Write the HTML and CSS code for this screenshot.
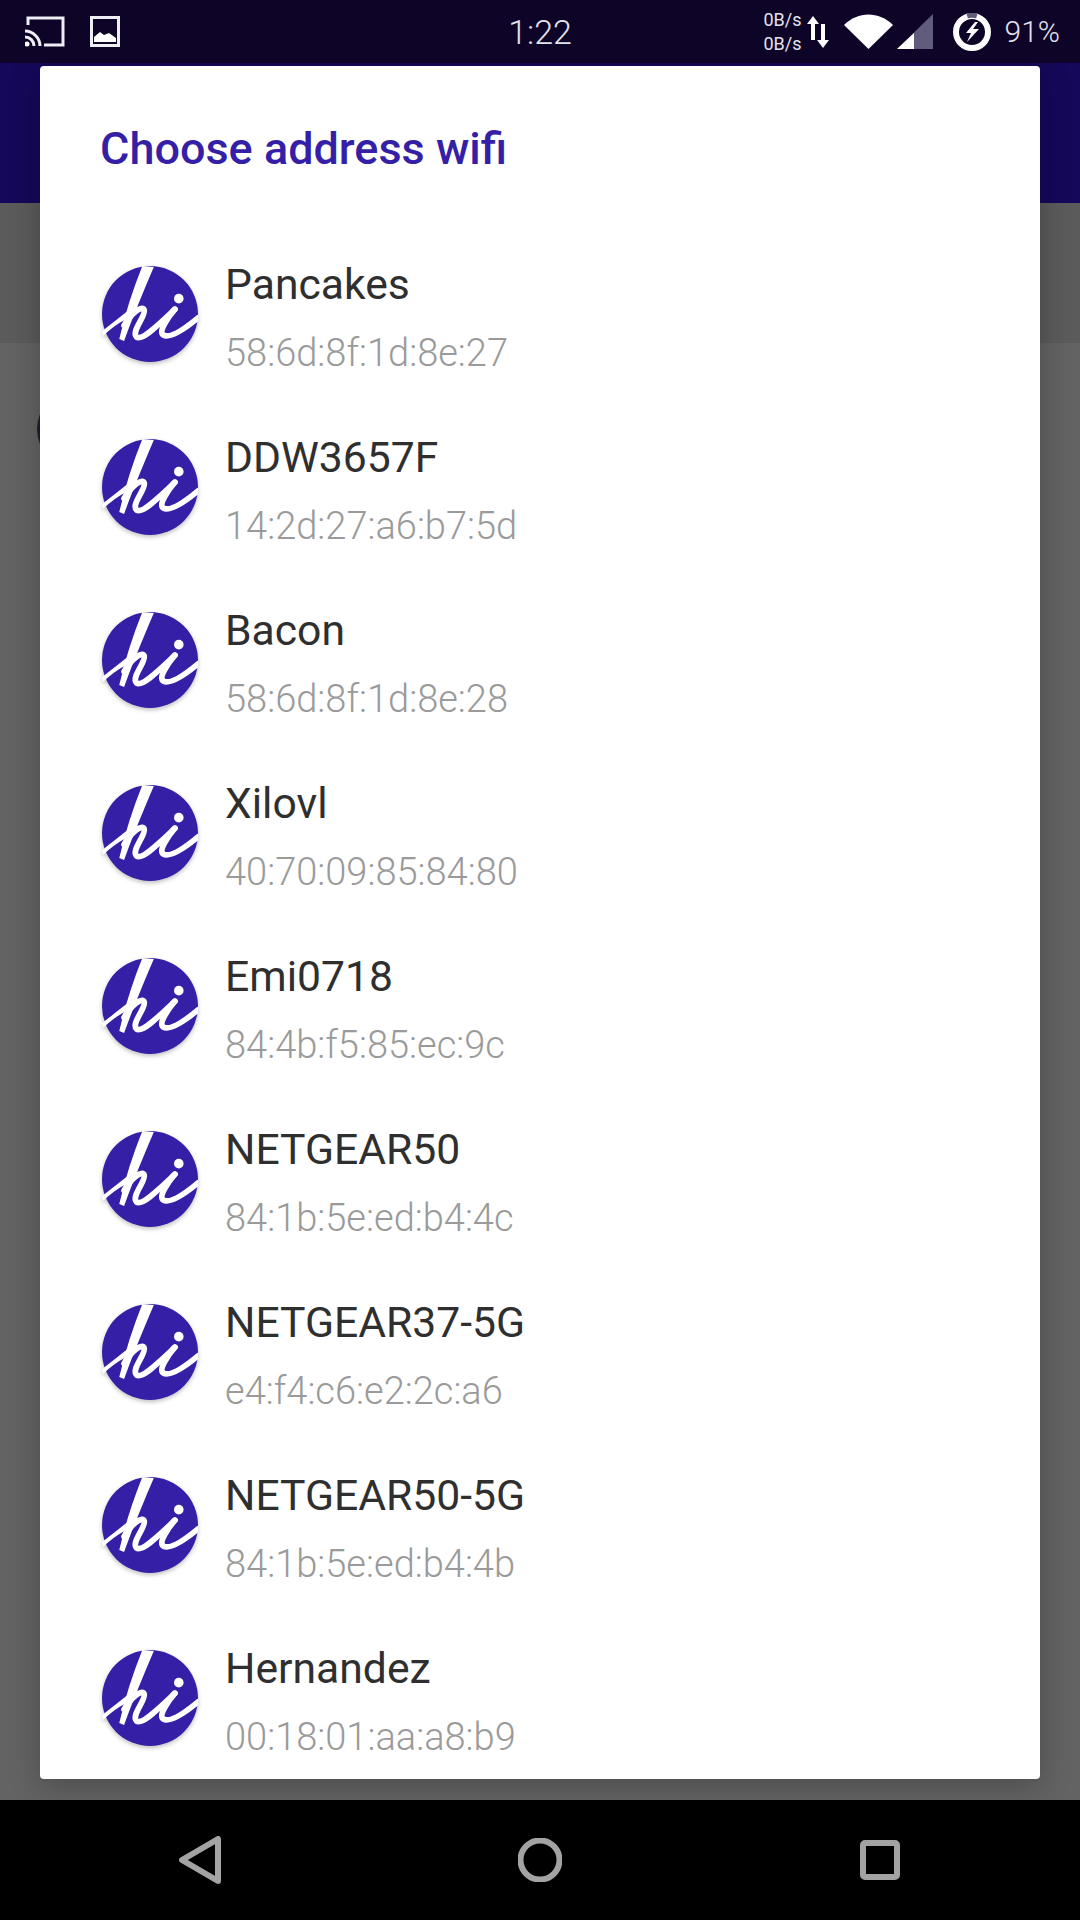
FILE: index.html
```html
<!DOCTYPE html>
<html lang="en">
<head>
    <meta charset="UTF-8">
    <meta name="viewport" content="width=device-width, initial-scale=1.0">
    <title>Choose address wifi</title>
    <link rel="stylesheet" href="styles.css">
</head>
<body>

<svg class="defs" width="0" height="0">
    <symbol id="hi" viewBox="0 0 100 100">
        <circle cx="50" cy="50" r="50" fill="#351fa6"/>
        <path d="M42 0L54 1C45 22 34 48 23 78L18 76C24 50 32 25 42 0Z" fill="#fff"/>
        <path d="M0 68C10 60 20 52 29 45L26 55C16 60 8 66 1 73Z" fill="#fff"/>
        <path class="hi-stroke" d="M23 62C30 50 42 40 44 46C46 52 30 68 36 74C42 78 58 62 76 45"/>
        <path class="hi-stroke" d="M76 45C70 52 58 68 64 72C72 76 88 64 100 54"/>
        <circle cx="80" cy="34" r="5" fill="#fff"/>
    </symbol>
</svg>

<div class="statusbar">
    <div class="status-left">
        <svg width="40" height="31" viewBox="0 0 40 31">
            <path class="ico-line" d="M3 9V2H38V29H19"/>
            <path class="ico-line" d="M0 15C8 15 15 22 15 30M0 21C5 21 9 25 9 30" stroke-width="3"/>
            <circle cx="2" cy="28" r="2.500" fill="#fff"/>
        </svg>
        <svg width="30" height="31" viewBox="0 0 30 31">
            <rect class="ico-line" x="1.500" y="1.500" width="27" height="28"/>
            <path d="M4 26V21L10 16L14 19L19 17L26 22V26Z" fill="#fff"/>
        </svg>
    </div>
    <div class="clock">1:22</div>
    <div class="status-right">
        <div class="netspeed">0B/s<br>0B/s</div>
        <svg class="arrows" width="22" height="32" viewBox="0 0 22 32">
            <path d="M6 0L12 8H8V24H4V8H0ZM16 32L22 24H18V8H14V24H10Z" fill="#fff"/>
        </svg>
        <svg class="wifi" width="49" height="35" viewBox="0 0 49 35">
            <path d="M0 11C14 -3 35 -3 49 11L24.500 35Z" fill="#fff"/>
        </svg>
        <svg class="signal" width="36" height="35" viewBox="0 0 36 35">
            <path d="M36 0V35H0Z" fill="#625c7c"/>
            <path d="M17 19V35H0Z" fill="#fff"/>
        </svg>
        <svg class="battery" width="38" height="38" viewBox="0 0 38 38">
            <circle cx="19" cy="19" r="16" fill="none" stroke="#fff" stroke-width="6"/>
            <path d="M14 2.500A17 17 0 0 1 24 2.500" fill="none" stroke="#625c7c" stroke-width="6"/>
            <path d="M22 9L13 20H18L14 29L26 16H20L25 9Z" fill="#fff"/>
        </svg>
        <div class="battery-pct">91%</div>
    </div>
</div>

<div class="screen">
    <div class="appbar"></div>
    <div class="subbar"></div>
    <div class="peek"></div>

    <div class="dialog">
        <h1 class="dialog-title">Choose address wifi</h1>
        <div class="wifi-list">
            <div class="wifi-row">
                <svg class="avatar"><use href="#hi"/></svg>
                <div><div class="ssid">Pancakes</div><div class="mac">58:6d:8f:1d:8e:27</div></div>
            </div>
            <div class="wifi-row">
                <svg class="avatar"><use href="#hi"/></svg>
                <div><div class="ssid">DDW3657F</div><div class="mac">14:2d:27:a6:b7:5d</div></div>
            </div>
            <div class="wifi-row">
                <svg class="avatar"><use href="#hi"/></svg>
                <div><div class="ssid">Bacon</div><div class="mac">58:6d:8f:1d:8e:28</div></div>
            </div>
            <div class="wifi-row">
                <svg class="avatar"><use href="#hi"/></svg>
                <div><div class="ssid">Xilovl</div><div class="mac">40:70:09:85:84:80</div></div>
            </div>
            <div class="wifi-row">
                <svg class="avatar"><use href="#hi"/></svg>
                <div><div class="ssid">Emi0718</div><div class="mac">84:4b:f5:85:ec:9c</div></div>
            </div>
            <div class="wifi-row">
                <svg class="avatar"><use href="#hi"/></svg>
                <div><div class="ssid">NETGEAR50</div><div class="mac">84:1b:5e:ed:b4:4c</div></div>
            </div>
            <div class="wifi-row">
                <svg class="avatar"><use href="#hi"/></svg>
                <div><div class="ssid">NETGEAR37-5G</div><div class="mac">e4:f4:c6:e2:2c:a6</div></div>
            </div>
            <div class="wifi-row">
                <svg class="avatar"><use href="#hi"/></svg>
                <div><div class="ssid">NETGEAR50-5G</div><div class="mac">84:1b:5e:ed:b4:4b</div></div>
            </div>
            <div class="wifi-row">
                <svg class="avatar"><use href="#hi"/></svg>
                <div><div class="ssid">Hernandez</div><div class="mac">00:18:01:aa:a8:b9</div></div>
            </div>
        </div>
    </div>
</div>

<div class="navbar">
    <svg width="42" height="48" viewBox="0 0 42 48">
        <path class="nav-line" d="M39 3V45L3 24Z"/>
    </svg>
    <svg width="44" height="44" viewBox="0 0 44 44">
        <circle class="nav-line" cx="22" cy="22" r="19.500"/>
    </svg>
    <svg width="40" height="40" viewBox="0 0 40 40">
        <rect class="nav-line" x="3" y="3" width="34" height="34" rx="2"/>
    </svg>
</div>

</body>
</html>
```

FILE: styles.css
```css
* {
    box-sizing: border-box;
}

body {
    font-family: 'Roboto', sans-serif;
    margin: 0;
    width: 1080px;
    height: 1920px;
    display: flex;
    flex-direction: column;
    overflow: hidden;
    background: #000;
}

.defs {
    position: absolute;
}

.hi-stroke {
    fill: none;
    stroke: #fff;
    stroke-width: 6;
    stroke-linecap: round;
}

.statusbar {
    height: 63px;
    background: #0d0427;
    display: grid;
    grid-template-columns: 1fr auto 1fr;
    align-items: center;
    color: #e4e2ec;
}

.status-left {
    display: flex;
    gap: 25px;
    padding-left: 25px;
}

.ico-line {
    fill: none;
    stroke: #eeeef4;
    stroke-width: 3;
}

.clock {
    font-size: 34px;
    font-weight: 300;
}

.status-right {
    display: flex;
    align-items: center;
    justify-content: flex-end;
    padding-right: 20px;
}

.netspeed {
    font-size: 18px;
    line-height: 24px;
    margin-right: 5px;
    text-align: right;
}

.arrows {
    margin-right: 15px;
}

.wifi {
    margin-right: 4px;
}

.signal {
    margin-right: 20px;
}

.battery {
    margin-right: 14px;
}

.battery-pct {
    font-size: 30px;
    font-weight: 300;
}

.screen {
    flex: 1;
    position: relative;
    overflow: hidden;
    background: #636363;
}

.appbar {
    height: 140px;
    background: #15085a;
}

.subbar {
    height: 140px;
    background: #5b5b5b;
}

.peek {
    position: absolute;
    left: 37px;
    top: 326px;
    width: 80px;
    height: 80px;
    border-radius: 50%;
    background: #20202c;
}

.dialog {
    position: absolute;
    left: 40px;
    top: 3px;
    width: 1000px;
    height: 1713px;
    background: #fff;
    border-radius: 4px;
    padding: 0 60px;
    overflow: hidden;
    box-shadow: 0 6px 30px rgba(0, 0, 0, 0.25);
}

.dialog-title {
    margin: 0;
    padding-top: 57px;
    height: 167px;
    font-size: 45px;
    font-weight: 500;
    line-height: 52px;
    color: #351fa6;
}

.wifi-row {
    height: 173px;
    display: flex;
    align-items: center;
    gap: 27px;
}

.avatar {
    width: 96px;
    height: 96px;
    margin: -12px 0 0 2px;
    flex: none;
    filter: drop-shadow(0 2px 2px rgba(0, 0, 0, 0.25));
}

.ssid {
    font-size: 42.670px;
    line-height: 47px;
    color: #2f2f2f;
    margin-bottom: 20px;
}

.mac {
    font-size: 38px;
    font-weight: 300;
    line-height: 50px;
    color: #9a9a9a;
}

.navbar {
    height: 120px;
    background: #000;
    display: grid;
    grid-template-columns: repeat(3, 340px);
    justify-content: center;
    justify-items: center;
    align-items: center;
}

.nav-line {
    fill: none;
    stroke: #a3a3a3;
    stroke-width: 6;
    stroke-linejoin: round;
}
```
